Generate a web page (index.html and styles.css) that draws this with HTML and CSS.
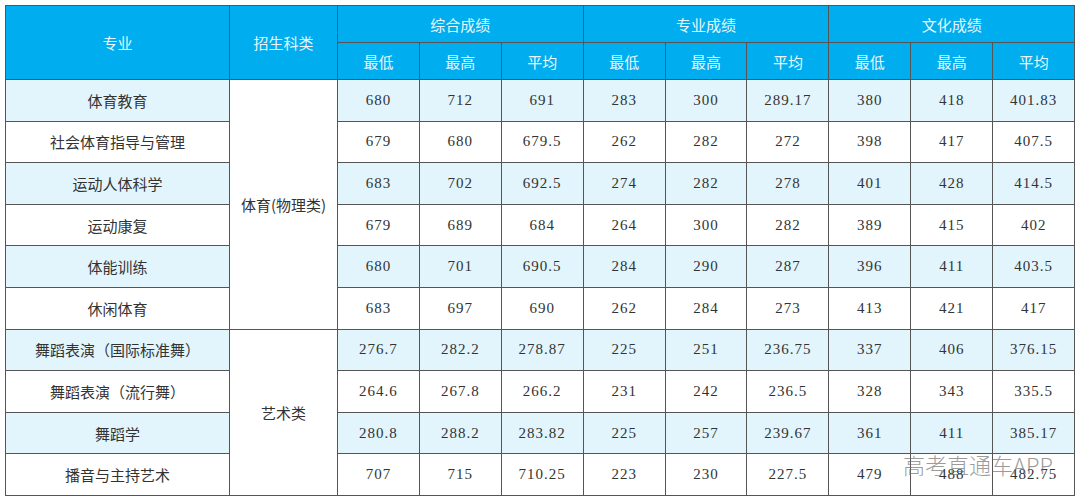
FILE: index.html
```html
<!DOCTYPE html>
<html lang="zh">
<head>
<meta charset="utf-8">
<link rel="stylesheet" href="styles.css">
</head>
<body>
<div class="wrap">
<table class="scores">
<colgroup>
<col class="c-major"><col class="c-type">
<col class="c-n"><col class="c-n"><col class="c-n">
<col class="c-n"><col class="c-n"><col class="c-n">
<col class="c-n"><col class="c-n"><col class="c-n">
</colgroup>
<thead>
<tr class="h1">
<th rowspan="2">专业</th>
<th rowspan="2">招生科类</th>
<th colspan="3">综合成绩</th>
<th colspan="3">专业成绩</th>
<th colspan="3">文化成绩</th>
</tr>
<tr class="h2">
<th>最低</th><th>最高</th><th>平均</th>
<th>最低</th><th>最高</th><th>平均</th>
<th>最低</th><th>最高</th><th>平均</th>
</tr>
</thead>
<tbody>
<tr class="alt"><td class="cn">体育教育</td><td class="cn type" rowspan="6">体育(物理类)</td><td>680</td><td>712</td><td>691</td><td>283</td><td>300</td><td>289.17</td><td>380</td><td>418</td><td>401.83</td></tr>
<tr><td class="cn">社会体育指导与管理</td><td>679</td><td>680</td><td>679.5</td><td>262</td><td>282</td><td>272</td><td>398</td><td>417</td><td>407.5</td></tr>
<tr class="alt"><td class="cn">运动人体科学</td><td>683</td><td>702</td><td>692.5</td><td>274</td><td>282</td><td>278</td><td>401</td><td>428</td><td>414.5</td></tr>
<tr><td class="cn">运动康复</td><td>679</td><td>689</td><td>684</td><td>264</td><td>300</td><td>282</td><td>389</td><td>415</td><td>402</td></tr>
<tr class="alt"><td class="cn">体能训练</td><td>680</td><td>701</td><td>690.5</td><td>284</td><td>290</td><td>287</td><td>396</td><td>411</td><td>403.5</td></tr>
<tr><td class="cn">休闲体育</td><td>683</td><td>697</td><td>690</td><td>262</td><td>284</td><td>273</td><td>413</td><td>421</td><td>417</td></tr>
<tr class="alt"><td class="cn">舞蹈表演（国际标准舞）</td><td class="cn type" rowspan="4">艺术类</td><td>276.7</td><td>282.2</td><td>278.87</td><td>225</td><td>251</td><td>236.75</td><td>337</td><td>406</td><td>376.15</td></tr>
<tr><td class="cn">舞蹈表演（流行舞）</td><td>264.6</td><td>267.8</td><td>266.2</td><td>231</td><td>242</td><td>236.5</td><td>328</td><td>343</td><td>335.5</td></tr>
<tr class="alt"><td class="cn">舞蹈学</td><td>280.8</td><td>288.2</td><td>283.82</td><td>225</td><td>257</td><td>239.67</td><td>361</td><td>411</td><td>385.17</td></tr>
<tr><td class="cn">播音与主持艺术</td><td>707</td><td>715</td><td>710.25</td><td>223</td><td>230</td><td>227.5</td><td>479</td><td>488</td><td>482.75</td></tr>
</tbody>
</table>
<div class="watermark">高考直通车APP</div>
</div>
</body>
</html>
```

FILE: styles.css
```css
html, body {
  margin: 0;
  padding: 0;
  background: #ffffff;
}
.wrap {
  position: relative;
  padding: 5px 0 0 5px;
  width: 1069px;
}
.scores {
  border-collapse: collapse;
  table-layout: fixed;
  width: 1069px;
  font-family: "Liberation Serif", "Noto Sans CJK SC", serif;
  font-size: 15px;
  letter-spacing: 1px;
  color: #333333;
}
.c-major { width: 224px; }
.c-type { width: 108px; }
.c-n { width: 81.9px; }
.scores th,
.scores td {
  border: 1px solid #555555;
  text-align: center;
  vertical-align: middle;
  padding: 0;
}
.scores th {
  background: #00adee;
  color: #eaf7fd;
  font-family: "Noto Sans CJK SC", sans-serif;
  font-weight: normal;
  font-size: 15px;
  letter-spacing: 0;
}
.h1 { height: 37px; }
.h2 { height: 37px; }
.scores tbody tr { height: 41.6px; }
.scores tbody tr.alt td { background: #e2f5fc; }
.scores tbody td.type { background: #ffffff !important; }
.cn {
  font-family: "Noto Sans CJK SC", sans-serif;
  font-size: 15px;
  letter-spacing: 0;
}
.watermark {
  position: absolute;
  left: 903px;
  top: 449px;
  font-family: "Noto Sans CJK SC", sans-serif;
  font-weight: 300;
  font-size: 22px;
  color: rgba(110, 110, 110, 0.7);
  white-space: nowrap;
  line-height: 30px;
}
```
